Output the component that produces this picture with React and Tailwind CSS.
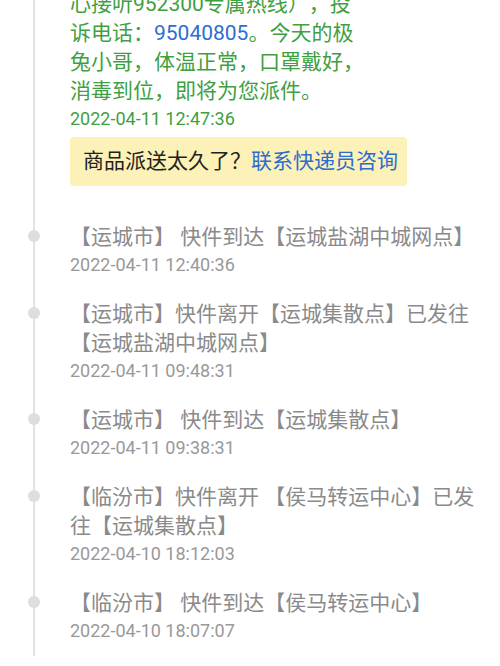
import React from 'react';

const entries = [
    { text: '【运城市】 快件到达【运城盐湖中城网点】', time: '2022-04-11 12:40:36' },
    { text: '【运城市】快件离开【运城集散点】已发往【运城盐湖中城网点】', time: '2022-04-11 09:48:31' },
    { text: '【运城市】 快件到达【运城集散点】', time: '2022-04-11 09:38:31' },
    { text: '【临汾市】快件离开 【侯马转运中心】已发往【运城集散点】', time: '2022-04-10 18:12:03' },
    { text: '【临汾市】 快件到达【侯马转运中心】', time: '2022-04-10 18:07:07' },
];

export default function App() {
    return (
        <div
            lang="zh-CN"
            className="h-[666px] w-full overflow-hidden bg-white [text-spacing-trim:space-all]"
            style={{ fontFamily: 'Roboto, "Noto Sans CJK SC", sans-serif' }}
        >
            <div className="ml-[33px] h-full border-l-2 border-[#e3e3e3] pr-[20px]">
                {/* current step */}
                <div className="-mt-[10px] pl-[35px]">
                    <p className="text-[21px] leading-[29px] text-[#3f9f42]">
                        <span className="block whitespace-nowrap">心接听952300专属热线），投</span>
                        <span className="block whitespace-nowrap">
                            诉电话：<span className="text-[#2c6dd2]">95040805</span>。今天的极
                        </span>
                        <span className="block whitespace-nowrap">兔小哥，体温正常，口罩戴好，</span>
                        <span className="block whitespace-nowrap">消毒到位，即将为您派件。</span>
                    </p>
                    <div className="text-[18px] leading-[26px] text-[#3f9f42]">2022-04-11 12:47:36</div>
                    <div className="mt-[5px] inline-block rounded-[4px] bg-[#fcf1b6] py-[10px] pl-[13px] pr-[9px] text-[21px] leading-[29px] text-[#222]">
                        商品派送太久了？<span className="text-[#2c6dd2]">联系快递员咨询</span>
                    </div>
                </div>

                <div className="mt-[37px] flex flex-col gap-[22px]">
                    {entries.map((e) => (
                        <div key={e.time} className="relative pl-[35px]">
                            <span className="absolute left-[-7px] top-[7px] h-[12px] w-[12px] rounded-full bg-[#dedede]" />
                            <p className="text-[21px] leading-[29px] text-[#8a8a8a]">{e.text}</p>
                            <div className="text-[18px] leading-[26px] text-[#999]">{e.time}</div>
                        </div>
                    ))}
                </div>
            </div>
        </div>
    );
}
